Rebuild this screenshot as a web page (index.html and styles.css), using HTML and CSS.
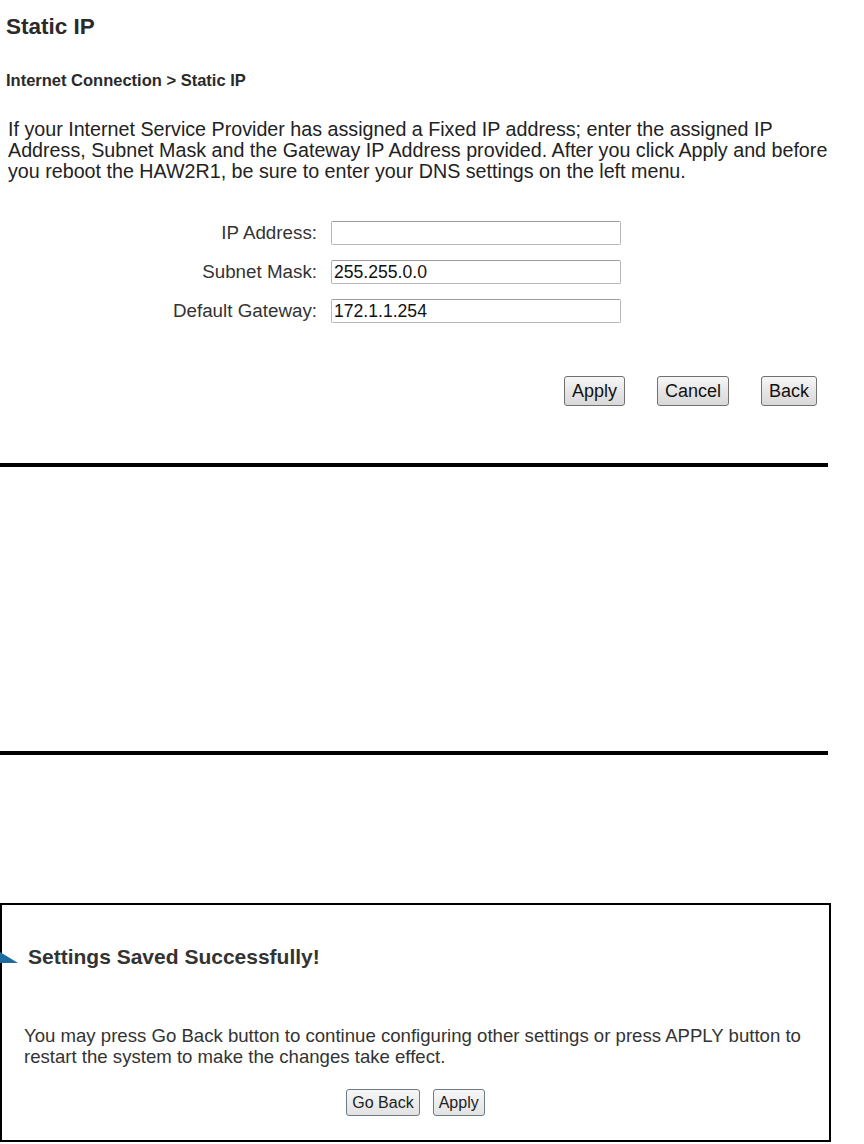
FILE: index.html
```html
<!DOCTYPE html>
<html lang="en">
<head>
    <meta charset="UTF-8">
    <title>Static IP</title>
    <link rel="stylesheet" href="styles.css">
</head>
<body>
    <div class="static-ip">
        <h1 class="page-title">Static IP</h1>
        <div class="crumbs">Internet Connection &gt; Static IP</div>
        <p class="intro">If your Internet Service Provider has assigned a Fixed IP address; enter the assigned IP Address, Subnet Mask and the Gateway IP Address provided. After you click Apply and before you reboot the HAW2R1, be sure to enter your DNS settings on the left menu.</p>

        <div class="ip-form">
            <label for="ip-address">IP Address:</label>
            <input type="text" id="ip-address" value="">
            <label for="subnet-mask">Subnet Mask:</label>
            <input type="text" id="subnet-mask" value="255.255.0.0">
            <label for="gateway">Default Gateway:</label>
            <input type="text" id="gateway" value="172.1.1.254">
        </div>

        <div class="form-buttons">
            <button class="btn">Apply</button>
            <button class="btn">Cancel</button>
            <button class="btn">Back</button>
        </div>
    </div>

    <hr class="rule rule-first">
    <hr class="rule rule-second">

    <div class="saved-box">
        <div class="saved-title">
            <svg class="saved-mark" width="18" height="11" viewBox="0 0 18 11">
                <polygon points="0,0 18,11 0,11" fill="#1f6b9f"/>
            </svg>
            <span>Settings Saved Successfully!</span>
        </div>
        <p class="saved-text">You may press Go Back button to continue configuring other settings or press APPLY button to restart the system to make the changes take effect.</p>
        <div class="saved-buttons">
            <button class="btn-small">Go Back</button>
            <button class="btn-small">Apply</button>
        </div>
    </div>
</body>
</html>
```

FILE: styles.css
```css
body {
    margin: 0;
    padding: 0;
    font-family: "Liberation Sans", Arial, sans-serif;
    color: #222;
    background: #fff;
}
.static-ip {
    padding: 0 8px 0 6px;
}
.page-title {
    margin: 14px 0 0;
    font-size: 22.5px;
    line-height: 26px;
    font-weight: bold;
    color: #2a2a2a;
}
.crumbs {
    margin-top: 30px;
    font-size: 16.5px;
    line-height: 20px;
    font-weight: bold;
    color: #2a2a2a;
}
.intro {
    max-width: 840px;
    margin: 29px 0 0 2px;
    font-size: 19.7px;
    line-height: 21px;
    color: #222;
}
.ip-form {
    display: grid;
    grid-template-columns: 311px 290px;
    column-gap: 14px;
    row-gap: 15px;
    align-items: center;
    margin-top: 39px;
}
.ip-form label {
    text-align: right;
    font-size: 18.8px;
    color: #333;
}
.ip-form input {
    box-sizing: border-box;
    width: 290px;
    height: 24px;
    margin: 0;
    padding: 0 2px;
    border: 1px solid #b5b8bd;
    border-top-color: #9a9ca0;
    border-radius: 2px;
    font-family: "Liberation Sans", Arial, sans-serif;
    font-size: 17.6px;
    color: #111;
    outline: none;
}
.form-buttons {
    display: flex;
    justify-content: flex-end;
    gap: 32px;
    margin-top: 53px;
    padding-right: 39px;
}
.btn {
    height: 30px;
    padding: 0 7px;
    border: 1px solid #707070;
    border-radius: 3px;
    background: linear-gradient(#f7f7f7, #e6e6e6 50%, #d8d8d8);
    font-family: "Liberation Sans", Arial, sans-serif;
    font-size: 18px;
    color: #111;
}
.rule {
    width: 828px;
    height: 4px;
    margin: 0;
    border: none;
    background: #000;
}
.rule-first {
    margin-top: 57px;
}
.rule-second {
    margin-top: 284px;
}
.saved-box {
    box-sizing: border-box;
    width: 831px;
    height: 239px;
    margin-top: 148px;
    padding: 40px 0 0;
    border: 2px solid #000;
}
.saved-title {
    display: flex;
    align-items: center;
    gap: 10px;
    height: 24px;
    margin-left: -2px;
    font-size: 21px;
    font-weight: bold;
    color: #333;
}
.saved-mark {
    flex-shrink: 0;
}
.saved-text {
    max-width: 795px;
    margin: 56px 0 0 22px;
    font-size: 18.6px;
    line-height: 21px;
    color: #333;
}
.saved-buttons {
    display: flex;
    justify-content: center;
    gap: 13px;
    margin-top: 22px;
}
.btn-small {
    height: 27px;
    padding: 0 5px;
    border: 1px solid #6d7a8a;
    border-radius: 3px;
    background: linear-gradient(#f7f7f7, #e2e2e2);
    font-family: "Liberation Sans", Arial, sans-serif;
    font-size: 16px;
    color: #222;
}
```
